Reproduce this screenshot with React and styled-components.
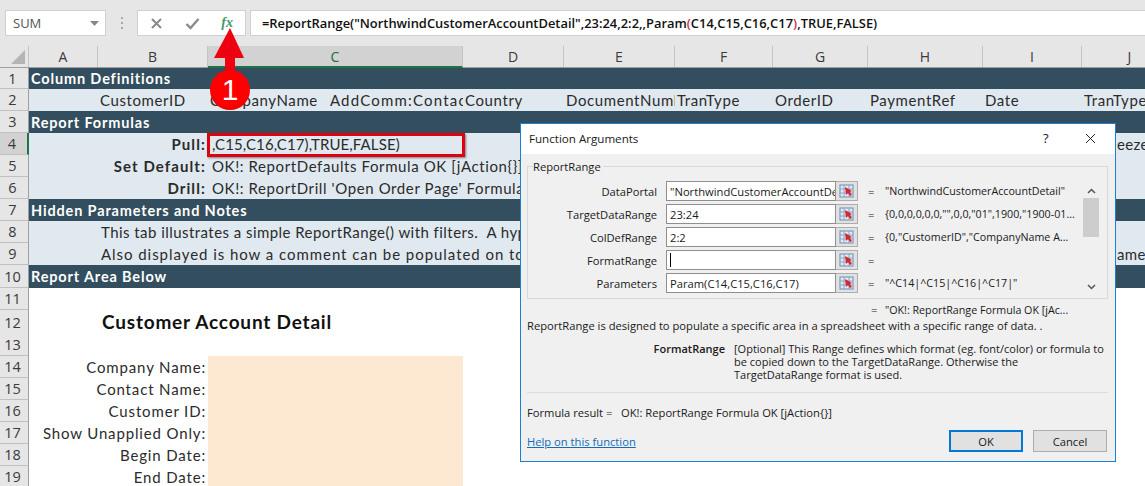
import React from 'react';
import styled, { createGlobalStyle } from 'styled-components';

const Global = createGlobalStyle`
  html, body { margin: 0; padding: 0; background: #fff; }
`;

const COLS = '29px 69px 110px 255px 101px 111px 98px 95px 115px 99px 96px';
const SHEET = '"Lato", "Open Sans", sans-serif';
const UI = '"Open Sans", "Noto Sans", sans-serif';

const Page = styled.div`
  position: relative;
  width: 1145px;
  height: 486px;
  overflow: hidden;
  background: #fff;
  font-family: ${SHEET};
  color: #2b2b2b;
`;

/* ---------- formula bar ---------- */
const Toolbar = styled.div`
  display: flex;
  align-items: flex-start;
  height: 46px;
  padding: 10px 0 0 5px;
  box-sizing: border-box;
  background: #e6e6e6;
`;
const NameBox = styled.div`
  width: 101px;
  height: 26px;
  box-sizing: border-box;
  display: flex;
  align-items: center;
  justify-content: space-between;
  padding: 0 6px 0 7px;
  background: #fff;
  border: 1px solid #d0d0d0;
  font: 13px ${UI};
  color: #555;
`;
const Grip = styled.div`
  width: 31px;
  height: 26px;
  display: flex;
  flex-direction: column;
  align-items: center;
  justify-content: center;
  gap: 3px;
  & > i { width: 2px; height: 2px; background: #a8a8a8; display: block; }
`;
const FxButtons = styled.div`
  width: 109px;
  height: 26px;
  box-sizing: border-box;
  display: flex;
  align-items: center;
  justify-content: space-between;
  padding: 0 12px 0 12px;
  background: #fff;
  border: 1px solid #d0d0d0;
  margin-right: 4px;
`;
const FxText = styled.span`
  font: italic bold 14px "Liberation Serif", serif;
  color: #3f9a68;
`;
const FormulaInput = styled.div`
  flex: 1;
  height: 26px;
  box-sizing: border-box;
  display: flex;
  align-items: center;
  padding-left: 11px;
  background: #fff;
  border: 1px solid #d0d0d0;
  border-right: 0;
  font: 600 12.9px ${UI};
  color: #111;
  white-space: pre;
`;
const Paren = styled.span`color: #c8304a;`;

/* ---------- sheet ---------- */
const ColHeader = styled.div`
  display: grid;
  grid-template-columns: ${COLS};
  height: 22px;
  background: #e6e6e6;
  border-bottom: 1px solid #9e9e9e;
  box-sizing: border-box;
`;
const Corner = styled.div`
  position: relative;
  border-right: 1px solid #c4c4c4;
  &::after {
    content: '';
    position: absolute;
    right: 3px;
    bottom: 3px;
    border-style: solid;
    border-width: 0 0 14px 14px;
    border-color: transparent transparent #b4b4b4 transparent;
  }
`;
const ColLetter = styled.div`
  display: flex;
  align-items: center;
  justify-content: center;
  box-sizing: border-box;
  font: 14px ${UI};
  color: ${p => (p.$selected ? '#1d6b41' : '#3a3a3a')};
  background: ${p => (p.$selected ? '#d2d2d2' : 'transparent')};
  border-right: 1px solid #c4c4c4;
  border-bottom: ${p => (p.$selected ? '2px solid #217346' : '0')};
  margin-bottom: ${p => (p.$selected ? '-1px' : '0')};
`;
const Row = styled.div`
  display: grid;
  grid-template-columns: ${COLS};
  height: ${p => p.$h || 22}px;
  align-items: stretch;
  background: ${p =>
    p.$kind === 'band' ? '#334e5e' : p.$kind === 'light' ? '#e0e9f0' : '#fff'};
  color: ${p => (p.$kind === 'band' ? '#fff' : '#2b2b2b')};
`;
const RowNum = styled.div`
  display: flex;
  align-items: center;
  justify-content: center;
  box-sizing: border-box;
  padding-right: 3px;
  background: ${p => (p.$selected ? '#d2d2d2' : '#e6e6e6')};
  border-right: ${p => (p.$selected ? '2px solid #217346' : '1px solid #9e9e9e')};
  border-bottom: 1px solid #c0c0c0;
  font: 14.5px ${UI};
  color: #3a3a3a;
`;
const BandTitle = styled.div`
  grid-column: 2 / -1;
  display: flex;
  align-items: center;
  padding-left: 2px;
  font-weight: 700;
  font-size: 14.5px;
  letter-spacing: 0.85px;
  white-space: nowrap;
`;
const Cell = styled.div`
  display: flex;
  align-items: center;
  grid-column: ${p => p.$col};
  padding-left: 2px;
  min-width: 0;
  font-size: 15px;
  letter-spacing: 0.6px;
  white-space: nowrap;
  overflow: hidden;
`;
const Wide = styled.span`
  margin-left: 12px;
  letter-spacing: 1.2px;
`;
const FormulaCell = styled(Cell)`
  padding-left: 4px;
  letter-spacing: ${p => (p.$tight ? '0.1px' : '0.6px')};
`;
const Right = styled.div`
  grid-column: 2 / 4;
  display: flex;
  align-items: center;
  justify-content: flex-end;
  padding-right: 2px;
  font-size: 15px;
  letter-spacing: ${p => (p.$bold ? '1.1px' : '0.85px')};
  font-weight: ${p => (p.$bold ? 700 : 400)};
  white-space: nowrap;
`;
const Spill = styled.div`
  grid-column: 3 / 11;
  display: flex;
  align-items: center;
  padding-left: 3px;
  font-size: 15px;
  letter-spacing: ${p => p.$spacing}px;
  white-space: nowrap;
  overflow: hidden;
`;
const ReportTitle = styled.div`
  grid-column: 3 / -1;
  display: flex;
  align-items: center;
  padding: 0 0 2px 4px;
  box-sizing: border-box;
  font-weight: 700;
  font-size: 19px;
  letter-spacing: 0.8px;
  color: #111;
  white-space: nowrap;
`;
const Peach = styled.div`
  grid-column: 4;
  background: #fde9d1;
`;
const Far = styled.div`
  grid-column: 11;
  display: flex;
  align-items: center;
  padding-left: 35px;
  font-size: 15px;
  letter-spacing: 0.3px;
`;

/* ---------- overlays ---------- */
const RedBox = styled.div`
  position: absolute;
  left: 207px;
  top: 133px;
  width: 258px;
  height: 24px;
  box-sizing: border-box;
  border: 3px solid #e00010;
  box-shadow: 1px 1px 2px rgba(0, 0, 0, 0.45);
`;
const Callout = styled.svg`
  position: absolute;
  left: 205px;
  top: 26px;
`;
const Badge = styled.div`
  position: absolute;
  left: 210px;
  top: 70px;
  width: 40px;
  height: 40px;
  border-radius: 50%;
  background: radial-gradient(circle at 50% 40%, #f00 60%, #c40008);
  display: flex;
  align-items: center;
  justify-content: center;
  color: #fff;
  font: 30px "Liberation Sans", sans-serif;
`;

/* ---------- dialog ---------- */
const Dialog = styled.div`
  position: absolute;
  left: 520px;
  top: 123px;
  width: 596px;
  height: 339px;
  box-sizing: border-box;
  border: 1px solid #1c7fd6;
  background: #f0f0f0;
  font: 11.2px ${UI};
  color: #1a1a1a;
  display: flex;
  flex-direction: column;
`;
const TitleBar = styled.div`
  height: 30px;
  flex: none;
  background: #fff;
  display: flex;
  align-items: center;
  padding: 0 18px 2px 8px;
  box-sizing: border-box;
  font-size: 11.6px;
`;
const TitleText = styled.div`flex: 1;`;
const Help = styled.div`
  width: 41px;
  font-size: 13px;
`;
const Group = styled.fieldset`
  margin: 5px 7px 0 6px;
  padding: 7px 8px 0 0;
  height: 140px;
  box-sizing: border-box;
  border: 1px solid #d8d8d8;
  display: flex;
  min-width: 0;
  position: relative;
`;
const Legend = styled.legend`
  margin-left: 5px;
  padding: 0 2px 0 0;
  line-height: 15px;
`;
const Args = styled.div`
  display: flex;
  flex-direction: column;
  gap: 3px;
`;
const ArgRow = styled.div`
  display: grid;
  grid-template-columns: 129px 9px 170px 22px 27px 1fr;
  height: 20px;
  align-items: center;
  width: 556px;
`;
const ArgLabel = styled.div`
  grid-column: 1;
  text-align: right;
`;
const ArgInput = styled.div`
  grid-column: 3;
  height: 20px;
  box-sizing: border-box;
  background: #fff;
  border: 1px solid #8f8f8f;
  display: flex;
  align-items: center;
  padding-left: 3px;
  overflow: hidden;
  white-space: nowrap;
`;
const Caret = styled.span`
  width: 1px;
  height: 14px;
  background: #000;
`;
const Picker = styled.button`
  height: 20px;
  padding: 0;
  box-sizing: border-box;
  background: #e1e1e1;
  border: 1px solid #adadad;
  border-left: 0;
  display: flex;
  align-items: center;
  justify-content: center;
`;
const Eq = styled.div`
  padding-left: 10px;
`;
const ArgValue = styled.div`
  font-size: 10.7px;
  white-space: nowrap;
`;
const Scroll = styled.div`
  width: 16px;
  height: 113px;
  margin-left: -1px;
  display: flex;
  flex-direction: column;
  align-items: center;
  justify-content: space-between;
  padding: 7px 0 4px;
  box-sizing: border-box;
  position: relative;
`;
const Thumb = styled.div`
  position: absolute;
  left: 0;
  top: 17px;
  width: 16px;
  height: 39px;
  background: #cdcdcd;
`;
const ResultLine = styled.div`
  margin: 3px 0 0 350px;
  height: 15px;
  line-height: 15px;
  white-space: nowrap;
  font-size: 10.7px;
`;
const EqInline = styled.span`
  display: inline-block;
  width: 14px;
  font-size: 11.2px;
`;
const Summary = styled.div`
  margin: 1px 0 0 6px;
  height: 15px;
  line-height: 15px;
  white-space: nowrap;
`;
const ArgHelp = styled.div`
  display: grid;
  grid-template-columns: 198px 1fr;
  column-gap: 9px;
  margin: 9px 7px 0 6px;
  line-height: 13px;
  font-size: 11px;
`;
const ArgHelpName = styled.div`
  text-align: right;
  font-weight: 600;
`;
const Rule = styled.div`
  height: 1px;
  margin: 11px 7px 0 6px;
  background: #dcdcdc;
`;
const ResultRow = styled.div`
  display: flex;
  margin: 12px 0 0 6px;
  height: 15px;
  line-height: 15px;
  white-space: nowrap;
`;
const ResultLabel = styled.div`width: 94px;`;
const Footer = styled.div`
  display: flex;
  align-items: center;
  margin: 10px 8px 0 6px;
`;
const HelpLink = styled.a`
  flex: 1;
  color: #0f6cbd;
  text-decoration: underline;
`;
const DlgButton = styled.button`
  width: 74px;
  height: 22px;
  margin-left: 10px;
  padding: 0;
  box-sizing: border-box;
  background: #e1e1e1;
  border: ${p => (p.$primary ? '2px solid #0078d7' : '1px solid #adadad')};
  font: 11.2px ${UI};
  color: #1a1a1a;
`;

const CellIcon = () => (
  <svg width="16" height="14" viewBox="0 0 16 14">
    <rect x="1" y="1" width="13" height="12" fill="#dfeaf6" stroke="#6f8db0" />
    <path d="M1 5h13M1 9h13M5 1v12M10 1v12" stroke="#8aa4c4" strokeWidth="1" />
    <path d="M6 3l7 4-2 1 2 3-2 1-2-3-2 2z" fill="#d8262c" />
  </svg>
);
const XIcon = ({ size = 13, color = '#8a8a8a', w = 2 }) => (
  <svg width={size} height={size} viewBox="0 0 13 13">
    <path d="M2 2l9 9M11 2l-9 9" stroke={color} strokeWidth={w} fill="none" />
  </svg>
);
const Check = () => (
  <svg width="15" height="13" viewBox="0 0 15 13">
    <path d="M1.5 7l4 4 8-9" stroke="#8a8a8a" strokeWidth="2.4" fill="none" />
  </svg>
);
const Chevron = ({ up }) => (
  <svg width="9" height="6" viewBox="0 0 9 6">
    <path d={up ? 'M1 5l3.5-3.5L8 5' : 'M1 1l3.5 3.5L8 1'} stroke="#555" strokeWidth="1.5" fill="none" />
  </svg>
);

const letters = ['A', 'B', 'C', 'D', 'E', 'F', 'G', 'H', 'I', 'J'];

const args = [
  ['DataPortal', '"NorthwindCustomerAccountDetail"', '"NorthwindCustomerAccountDetail"'],
  ['TargetDataRange', '23:24', '{0,0,0,0,0,0,"",0,0,"01",1900,"1900-01...'],
  ['ColDefRange', '2:2', '{0,"CustomerID","CompanyName A...'],
  ['FormatRange', null, ''],
  ['Parameters', 'Param(C14,C15,C16,C17)', '"^C14|^C15|^C16|^C17|"'],
];

const defs = [
  'CustomerID',
  <>CompanyName<Wide>AddComm:Contact</Wide></>,
  'Country', 'DocumentNumber', 'TranType', 'OrderID', 'PaymentRef', 'Date', 'TranType',
];
const filters = ['Company Name:', 'Contact Name:', 'Customer ID:', 'Show Unapplied Only:', 'Begin Date:', 'End Date:'];

export default function App() {
  return (
    <Page>
      <Global />
      <Toolbar>
        <NameBox>
          SUM
          <svg width="9" height="5" viewBox="0 0 9 5"><path d="M0 0h9L4.5 5z" fill="#888" /></svg>
        </NameBox>
        <Grip><i /><i /><i /></Grip>
        <FxButtons>
          <XIcon />
          <Check />
          <FxText>fx</FxText>
        </FxButtons>
        <FormulaInput>
          =ReportRange("NorthwindCustomerAccountDetail",23:24,2:2,,Param<Paren>(</Paren>C14,C15,C16,C17<Paren>)</Paren>,TRUE,FALSE)
        </FormulaInput>
      </Toolbar>

      <ColHeader>
        <Corner />
        {letters.map(l => (
          <ColLetter key={l} $selected={l === 'C'}>{l}</ColLetter>
        ))}
      </ColHeader>

      <Row $kind="band" $h={21}><RowNum>1</RowNum><BandTitle>Column Definitions</BandTitle></Row>
      <Row $kind="light">
        <RowNum>2</RowNum>
        {defs.map((d, i) => (
          <Cell key={i} $col={i + 3}>{d}</Cell>
        ))}
      </Row>
      <Row $kind="band"><RowNum>3</RowNum><BandTitle>Report Formulas</BandTitle></Row>
      <Row $kind="light">
        <RowNum $selected>4</RowNum>
        <Right $bold>Pull:</Right>
        <FormulaCell $col={4} $tight>,C15,C16,C17),TRUE,FALSE)</FormulaCell>
        <Far>eeze</Far>
      </Row>
      <Row $kind="light">
        <RowNum>5</RowNum>
        <Right $bold>Set Default:</Right>
        <FormulaCell $col="4 / -1">OK!: ReportDefaults Formula OK [jAction{'{}'}]</FormulaCell>
      </Row>
      <Row $kind="light">
        <RowNum>6</RowNum>
        <Right $bold>Drill:</Right>
        <FormulaCell $col="4 / -1">OK!: ReportDrill 'Open Order Page' Formula OK [jAction{'{}'}]</FormulaCell>
      </Row>
      <Row $kind="band"><RowNum>7</RowNum><BandTitle>Hidden Parameters and Notes</BandTitle></Row>
      <Row $kind="light">
        <RowNum>8</RowNum>
        <Spill $spacing={0.45}>This tab illustrates a simple ReportRange() with filters.{'\u00A0\u00A0'}A hyperlink is used to drill</Spill>
      </Row>
      <Row $kind="light">
        <RowNum>9</RowNum>
        <Spill $spacing={0.95}>Also displayed is how a comment can be populated on top of the page</Spill>
        <Far>ame.</Far>
      </Row>
      <Row $kind="band" $h={23}><RowNum>10</RowNum><BandTitle>Report Area Below</BandTitle></Row>
      <Row><RowNum>11</RowNum></Row>
      <Row $h={24}><RowNum>12</RowNum><ReportTitle>Customer Account Detail</ReportTitle></Row>
      <Row><RowNum>13</RowNum></Row>
      {filters.map((f, i) => (
        <Row key={f}>
          <RowNum>{14 + i}</RowNum>
          <Right>{f}</Right>
          <Peach />
        </Row>
      ))}

      <RedBox />
      <Callout width="50" height="50" viewBox="0 0 50 50">
        <path d="M25 2L39 32H30V50H20V32H9z" fill="#ee0010" />
      </Callout>
      <Badge>1</Badge>

      <Dialog>
        <TitleBar>
          <TitleText>Function Arguments</TitleText>
          <Help>?</Help>
          <XIcon size={13} color="#222" w={1} />
        </TitleBar>
        <Group>
          <Legend>ReportRange</Legend>
          <Args>
            {args.map(([name, val, res]) => (
              <ArgRow key={name}>
                <ArgLabel>{name}</ArgLabel>
                <ArgInput>{val === null ? <Caret /> : val}</ArgInput>
                <Picker><CellIcon /></Picker>
                <Eq>=</Eq>
                <ArgValue>{res}</ArgValue>
              </ArgRow>
            ))}
          </Args>
          <Scroll>
            <Chevron up />
            <Thumb />
            <Chevron />
          </Scroll>
        </Group>
        <ResultLine><EqInline>=</EqInline>"OK!: ReportRange Formula OK [jAc...</ResultLine>
        <Summary>ReportRange is designed to populate a specific area in a spreadsheet with a specific range of data. .</Summary>
        <ArgHelp>
          <ArgHelpName>FormatRange</ArgHelpName>
          <div>[Optional] This Range defines which format (eg. font/color) or formula to be copied down to the TargetDataRange. Otherwise the TargetDataRange format is used.</div>
        </ArgHelp>
        <Rule />
        <ResultRow>
          <ResultLabel>Formula result =</ResultLabel>
          OK!: ReportRange Formula OK [jAction{'{}'}]
        </ResultRow>
        <Footer>
          <HelpLink>Help on this function</HelpLink>
          <DlgButton $primary>OK</DlgButton>
          <DlgButton>Cancel</DlgButton>
        </Footer>
      </Dialog>
    </Page>
  );
}
